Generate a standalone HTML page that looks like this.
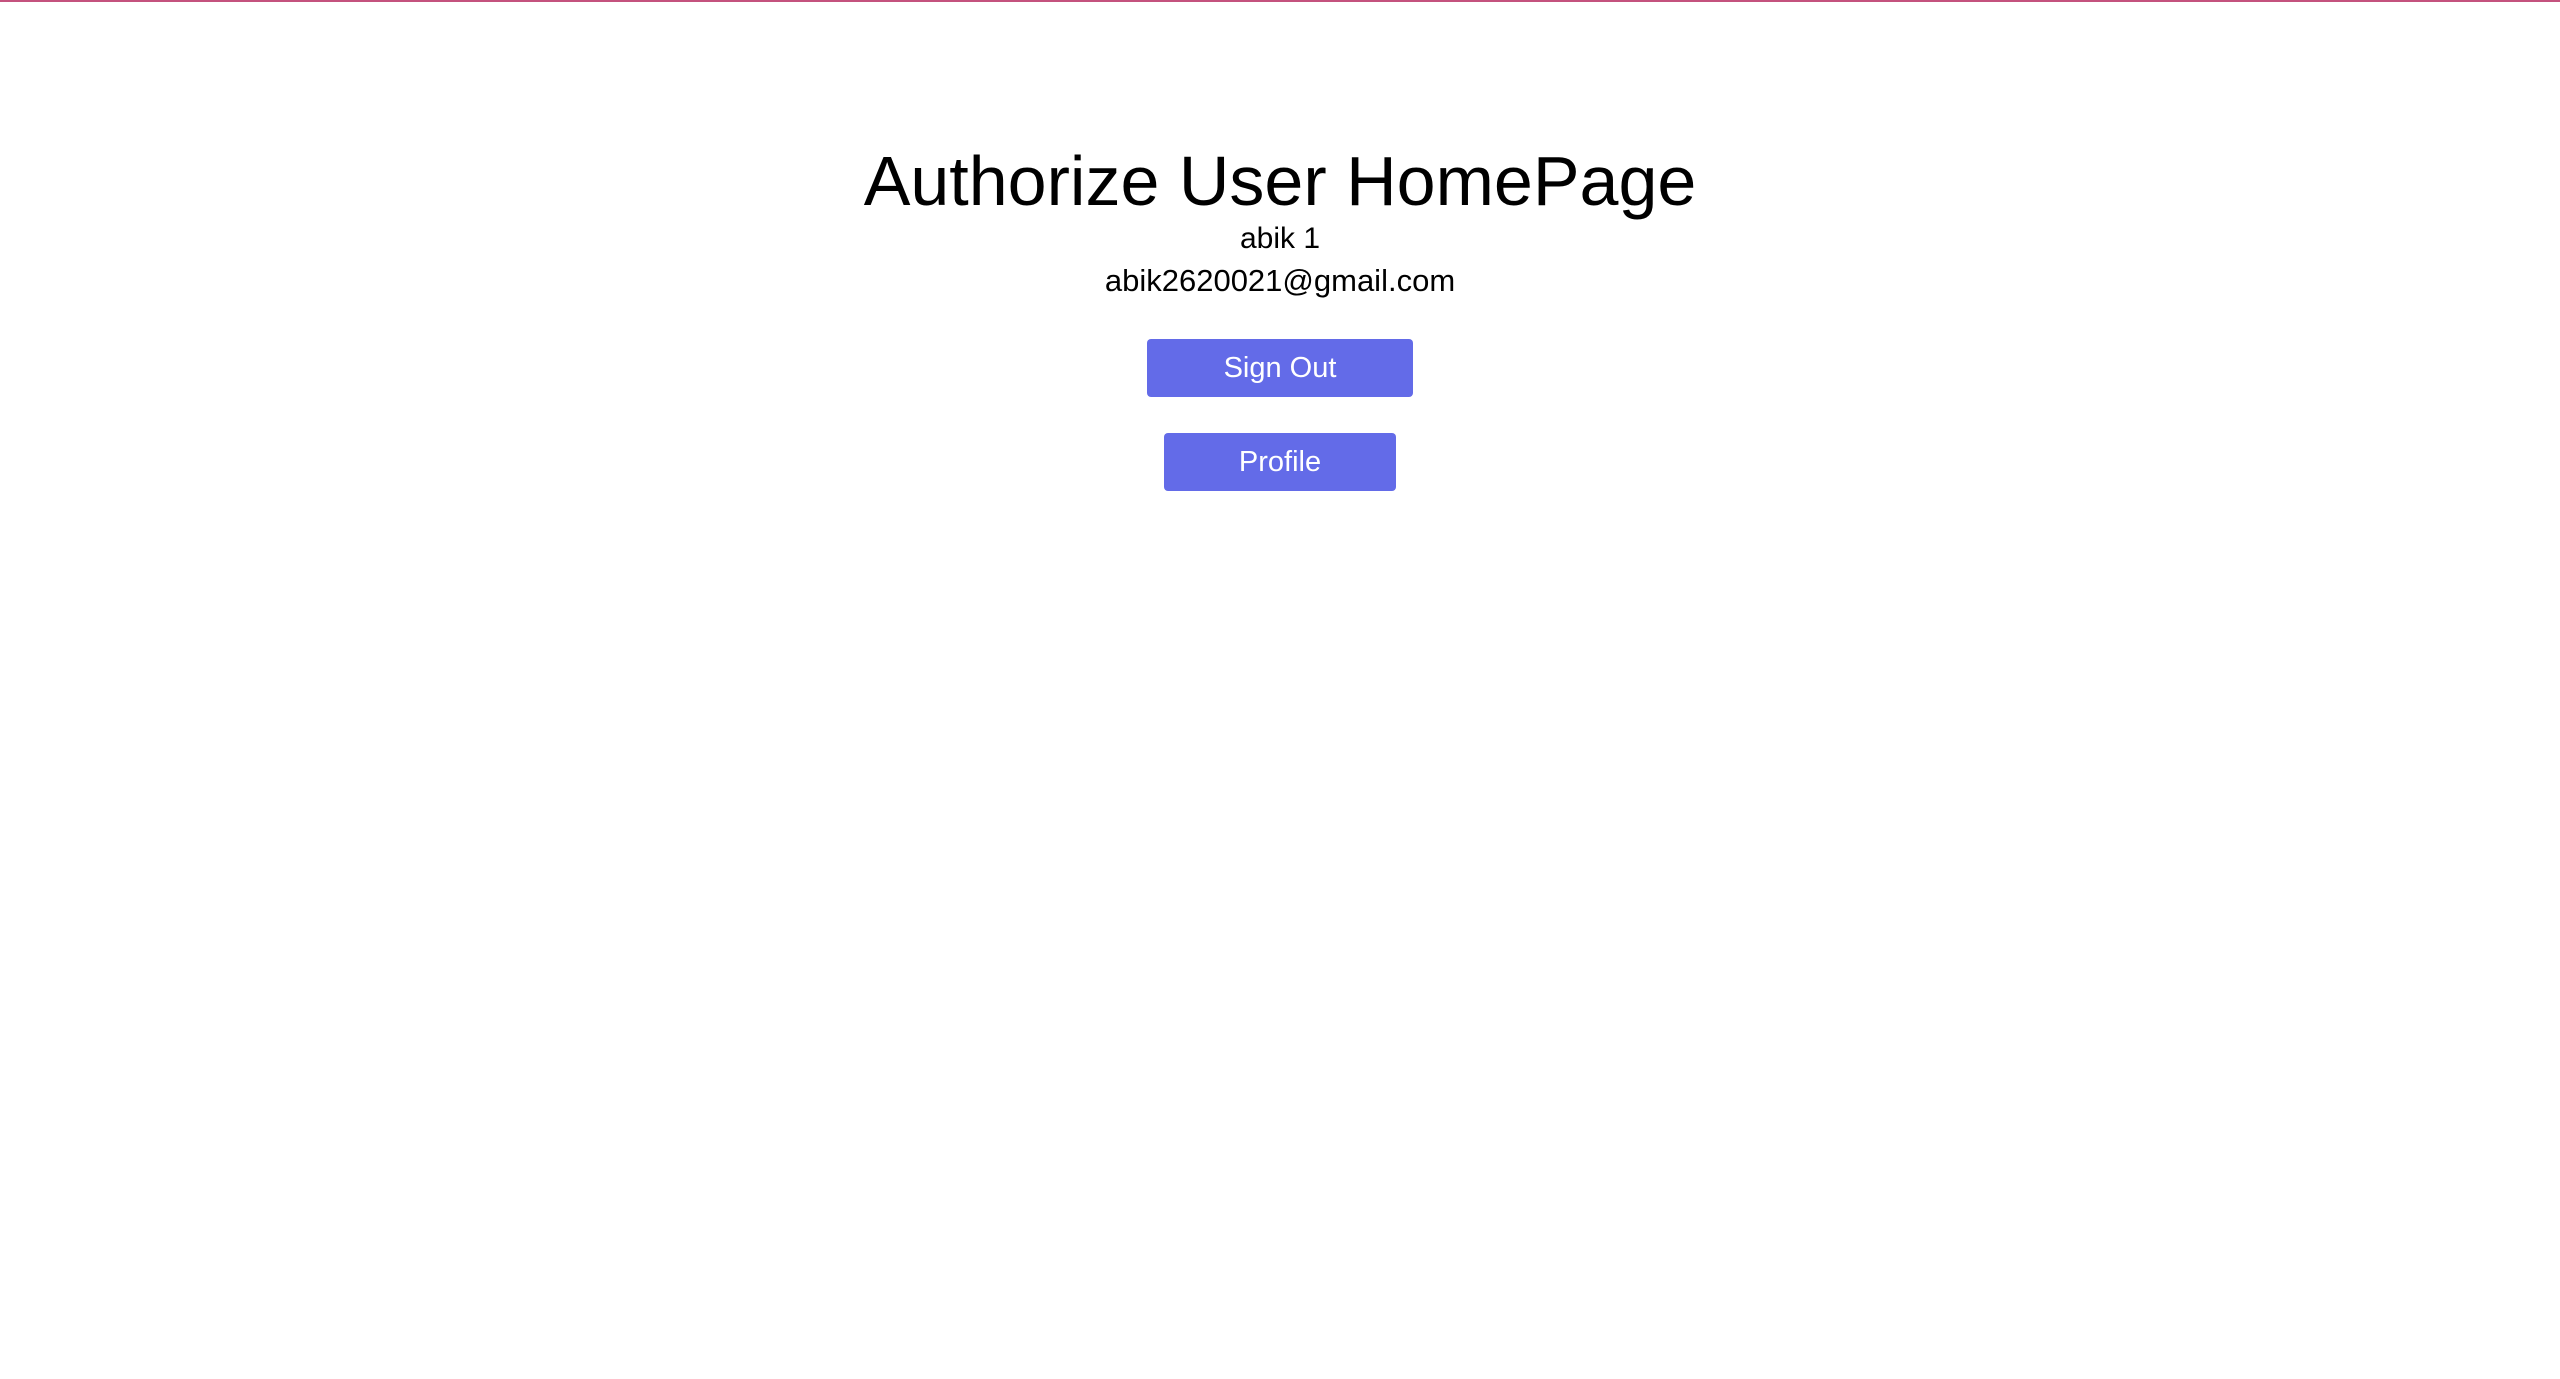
<!DOCTYPE html>
<html><head><meta charset="utf-8"><style>
html,body{margin:0;padding:0;background:#fff;width:2560px;height:1379px;overflow:hidden;font-family:"Liberation Sans",sans-serif;}
.topline{position:absolute;left:0;top:0;width:2560px;height:2px;background:#c4527e;}
.t{position:absolute;left:0;width:2560px;text-align:center;color:#000;white-space:nowrap;}
.btn{position:absolute;background:#636be8;border-radius:4px;color:#fff;text-align:center;font-size:29px;}
</style></head><body>
<div class="topline"></div>
<div class="t" style="top:141px;font-size:70px;line-height:80px;">Authorize User HomePage</div>
<div class="t" style="top:222px;font-size:30px;line-height:34px;">abik 1</div>
<div class="t" style="top:264px;font-size:31px;line-height:34px;">abik2620021@gmail.com</div>
<div class="btn" style="left:1147px;top:339px;width:266px;height:58px;line-height:58px;">Sign Out</div>
<div class="btn" style="left:1164px;top:433px;width:232px;height:58px;line-height:58px;">Profile</div>
</body></html>
